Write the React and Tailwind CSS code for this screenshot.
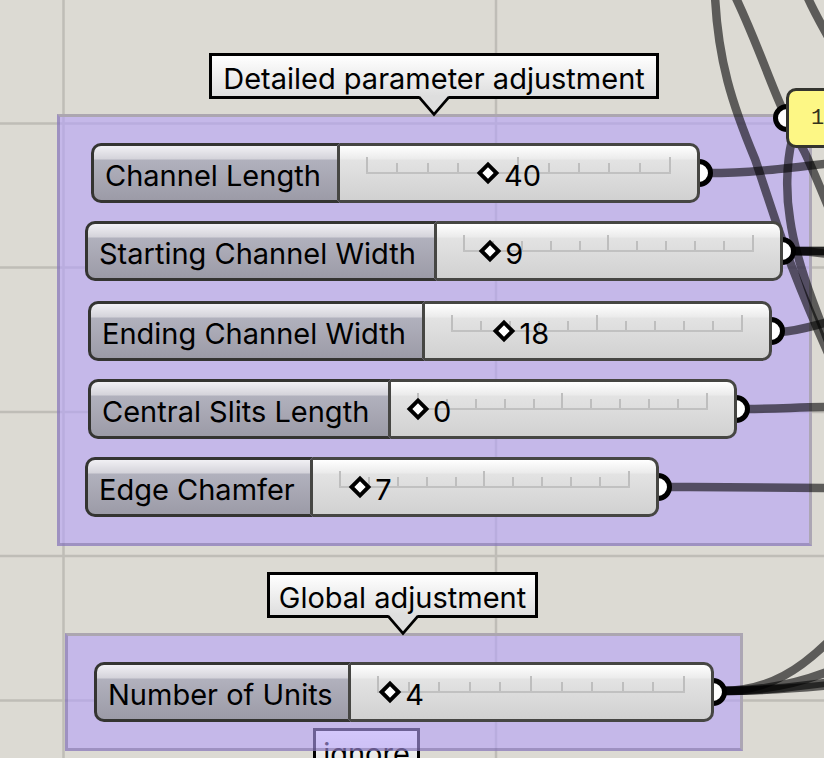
import { useState } from "react";

const DETAILED = [
  { id: "channel-length", label: "Channel Length", value: 40, place: "left-[91px] top-[143px] w-[609px]", labelWidth: "w-[249px]" },
  { id: "starting-width", label: "Starting Channel Width", value: 9, place: "left-[85px] top-[221px] w-[698px]", labelWidth: "w-[352px]" },
  { id: "ending-width", label: "Ending Channel Width", value: 18, place: "left-[88px] top-[301px] w-[684px]", labelWidth: "w-[337px]" },
  { id: "slits-length", label: "Central Slits Length", value: 0, place: "left-[88px] top-[379px] w-[649px]", labelWidth: "w-[303px]" },
  { id: "edge-chamfer", label: "Edge Chamfer", value: 7, place: "left-[85px] top-[457px] w-[574px]", labelWidth: "w-[228px]" },
];

const GLOBAL = [
  { id: "unit-count", label: "Number of Units", value: 4, place: "left-[94px] top-[662px] w-[620px]", labelWidth: "w-[257px]" },
];

const WIRES = [
  "M715 -4 C718 60 732 104 755 159 C764 185 780 236 792 267 S814 322 832 362",
  "M735 -4 C756 40 770 82 782 108 C792 132 798 140 803 149 S818 182 832 216",
  "M807 -4 C814 12 820 22 832 44",
  "M792 140 C786 165 786 195 790 219 C794 248 803 275 813 302 S826 334 834 358",
  "M708 173 C750 173 790 168 832 163",
  "M792 251 H832",
  "M792 251 H832",
  "M792 251 C804 251 818 252 832 255",
  "M780 332 C798 331 812 326 832 321",
  "M746 409 C780 409 800 407 832 407",
  "M668 487 C720 487 770 488 832 488",
  "M722 691 C770 691 802 668 832 638",
  "M722 691 C765 691 800 683 832 670",
  "M722 691 C765 691 800 686 832 682",
  "M722 691 C765 691 800 688 832 685",
];

const TICKS = [0, 1, 2, 3, 4, 5, 6, 7, 8, 9, 10];

function Note({ children, width }) {
  return (
    <div
      className={`${width} h-[46px] whitespace-nowrap border-[3px] border-black bg-linear-to-b from-white to-[#dedede] pt-[5px] text-center text-[29px] leading-[36px]`}
    >
      {children}
    </div>
  );
}

function Pointer() {
  return (
    <svg className="-mt-[3px] h-[21px] w-[34px]" viewBox="0 0 34 21" aria-hidden="true">
      <path d="M2 0H32V2L17 18.500L2 2Z" fill="#dedede" />
      <path d="M0 1.500H2.500L17 18.500L31.500 1.500H34" fill="none" stroke="#000" strokeWidth="2.700" />
    </svg>
  );
}

function Port({ side }) {
  return (
    <span className={`absolute top-[16px] h-[28px] w-[28px] rounded-full border-[5px] border-black bg-white ${side}`} />
  );
}

function Group({ place, height }) {
  return (
    <section
      className={`absolute ${place} ${height} border-[3px] border-[#584a7859] border-r-[#aca6b4] border-t-[#aca6b0] bg-[#b6a2f999]`}
    />
  );
}

function SliderNode({ id, label, value: initial, place, labelWidth }) {
  const [value, setValue] = useState(initial);
  return (
    <div className={`absolute h-[60px] ${place}`}>
      <Port side="-right-[13px]" />
      <div className="relative flex h-full">
        <label
          htmlFor={id}
          className={`${labelWidth} shrink-0 whitespace-nowrap rounded-l-[10px] border-[3px] border-[#343431] border-r-[#464643] bg-[linear-gradient(to_bottom,#f1f0f4_0,#d4d3da_13px,#b1b1bd_14px,#9c9ba7_100%)] pl-[11px] pt-[12px] text-[29px] leading-[36px]`}
        >
          {label}
        </label>
        <div className="flex-1 rounded-r-[10px] border-y-[3px] border-r-[3px] border-[#464643] bg-[linear-gradient(to_bottom,#ffffff_0,#ebebeb_13px,#e3e3e3_14px,#d1d1d1_100%)] px-[26px]">
          <div className="relative h-full">
            <div className="flex h-[28px] items-end justify-between border-b-2 border-[#c1c1c1]">
              {TICKS.map((t) => (
                <span key={t} className={`w-[2px] bg-[#bebebe] ${t % 5 === 0 ? "h-[15px]" : "h-[9px]"}`} />
              ))}
            </div>
            <input
              id={id}
              type="range"
              min="0"
              max="100"
              value={value}
              onChange={(e) => setValue(Number(e.target.value))}
              className="absolute -left-[7px] top-[19px] h-[16px] w-[calc(100%+14px)] cursor-pointer appearance-none bg-transparent outline-none [&::-webkit-slider-thumb]:h-[16px] [&::-webkit-slider-thumb]:w-[16px] [&::-webkit-slider-thumb]:rotate-45 [&::-webkit-slider-thumb]:appearance-none [&::-webkit-slider-thumb]:border-4 [&::-webkit-slider-thumb]:border-black [&::-webkit-slider-thumb]:bg-white"
            />
            <output
              htmlFor={id}
              className="pointer-events-none absolute top-[12px] pl-[16px] text-[29px] leading-[36px]"
              style={{ left: `${value}%` }}
            >
              {value}
            </output>
          </div>
        </div>
      </div>
    </div>
  );
}

export default function App() {
  return (
    <main className="relative h-screen w-full overflow-hidden bg-[#dcdad3] font-['Inter','Liberation_Sans',sans-serif] text-black">
      <svg className="absolute inset-0 h-full w-full" aria-hidden="true">
        <g stroke="#bfbdb7" strokeWidth="2.500">
          <path d="M63.500 0V2000M496 0V2000M928.500 0V2000" />
          <path d="M0 123.500H3000M0 267.500H3000M0 412H3000M0 556H3000M0 700.500H3000" />
        </g>
      </svg>

      <div className="absolute left-[313px] top-[728px]">
        <Note width="w-[107px]">ignore</Note>
      </div>

      <Group place="left-[57px] top-[114px] w-[755px]" height="h-[432px]" />
      <Group place="left-[65px] top-[633px] w-[678px]" height="h-[118px]" />

      <svg className="absolute inset-0 h-full w-full" aria-hidden="true">
        <g fill="none" stroke="#000000" strokeOpacity="0.58" strokeWidth="8.500">
          {WIRES.map((d, i) => (
            <path key={i} d={d} />
          ))}
        </g>
      </svg>

      <div className="absolute left-[209px] top-[53px] flex flex-col items-center">
        <Note width="w-[450px]">Detailed parameter adjustment</Note>
        <Pointer />
      </div>
      <div className="absolute left-[267px] top-[572px] flex flex-col items-center">
        <Note width="w-[271px]">Global adjustment</Note>
        <Pointer />
      </div>

      {DETAILED.map((s) => (
        <SliderNode key={s.id} {...s} />
      ))}
      {GLOBAL.map((s) => (
        <SliderNode key={s.id} {...s} />
      ))}

      <div className="absolute left-[786px] top-[88px] h-[60px] w-[120px]">
        <Port side="-left-[13px]" />
        <div className="relative h-full rounded-[10px] border-[3px] border-[#34342f] bg-[#fdf785] pl-[22px] pt-[16px] font-['Liberation_Mono',monospace] text-[22px] leading-[24px] text-[#33321c]">
          1
        </div>
      </div>
    </main>
  );
}
